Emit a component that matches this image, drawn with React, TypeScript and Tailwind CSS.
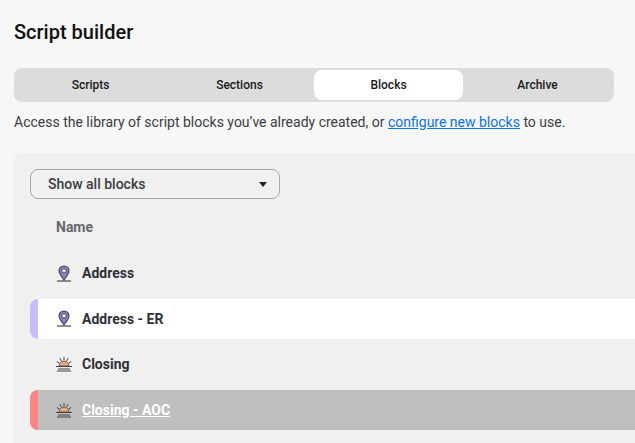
const font = { fontFamily: 'Roboto, sans-serif' };

const PinIcon = () => (
  <svg width="16" height="17" viewBox="0 0 16 17" fill="none">
    <path d="M8 1C4.9 1 3 3.2 3 5.8c0 3 2.8 6.2 5 9 2.2-2.8 5-6 5-9C13 3.2 11.1 1 8 1z" fill="#8787c7" stroke="#3f3f4a" strokeWidth="1.1" />
    <circle cx="8" cy="5.8" r="2.3" fill="#f4f4f4" stroke="#3f3f4a" strokeWidth="1" />
    <path d="M1 16h14" stroke="#222" strokeWidth="1" />
  </svg>
);

const SunIcon = () => (
  <svg width="16" height="16" viewBox="0 0 16 16" fill="none">
    <path d="M3 10a5 5 0 0 1 10 0z" fill="#f0a67e" stroke="#444" strokeWidth="0.8" />
    <path d="M8 1v3M3.8 2.2l1.5 2.6M12.2 2.2l-1.5 2.6M.8 5.5l2.4 1.4M15.2 5.5l-2.4 1.4" stroke="#444" strokeWidth="1" />
    <path d="M0 10.5h16M2 13h12M1 15h14" stroke="#444" strokeWidth="1" />
  </svg>
);

const Row = ({ label, icon, bar, className, textClass }: { label: string; icon: React.ReactNode; bar?: string; className?: string; textClass?: string }) => (
  <div className={`flex h-10 items-center rounded-l-lg ${className ?? ''}`}>
    <div className={`h-full w-2 rounded-l-lg ${bar ?? ''}`} />
    <div className="ml-[18px] flex w-4 justify-center">{icon}</div>
    <span className={`ml-2.5 text-sm font-bold ${textClass ?? 'text-[#2f2f38]'}`}>{label}</span>
  </div>
);

export default function App() {
  return (
    <div className="h-[443px] w-[635px] overflow-hidden bg-[#f7f7f7] pl-3.5" style={font}>
      <h1 className="pt-[18px] text-xl leading-7 font-medium text-[#111]">Script builder</h1>

      <div className="mt-[22px] grid h-[34px] w-[600px] grid-cols-4 rounded-lg bg-[#dcdcdc] p-0.5 text-xs font-medium text-[#1a1a1a]">
        <div className="flex items-center justify-center">Scripts</div>
        <div className="flex items-center justify-center">Sections</div>
        <div className="flex items-center justify-center rounded-lg bg-white">Blocks</div>
        <div className="flex items-center justify-center">Archive</div>
      </div>

      <p className="mt-2.5 text-sm leading-5 text-[#3c3c44]">
        Access the library of script blocks you’ve already created, or{' '}
        <a className="text-[#0a74e0] underline">configure new blocks</a> to use.
      </p>

      <div className="mt-[21px] h-[300px] w-[640px] rounded-tl-lg bg-[#f0f0f0] pt-4 pl-4">
        <div className="flex h-[30px] w-[250px] items-center justify-between rounded-lg border border-[#a8a8a8] pr-3 pl-[17px] text-sm font-medium text-[#3c3c44]">
          <span>Show all blocks</span>
          <span className="h-0 w-0 border-x-[4.5px] border-t-[5px] border-x-transparent border-t-[#222]" />
        </div>
        <div className="mt-[18px] mb-4 pl-[26px] text-sm leading-5 font-bold text-[#66666e]">Name</div>
        <div className="flex flex-col gap-[5.5px]">
          <Row label="Address" icon={<PinIcon />} />
          <Row label="Address - ER" icon={<PinIcon />} bar="bg-[#c7bdfb]" className="bg-white" />
          <Row label="Closing" icon={<SunIcon />} />
          <Row label="Closing - AOC" icon={<SunIcon />} bar="bg-[#ff8585]" className="bg-[#bfbfbf]" textClass="text-white underline" />
        </div>
      </div>
    </div>
  );
}
